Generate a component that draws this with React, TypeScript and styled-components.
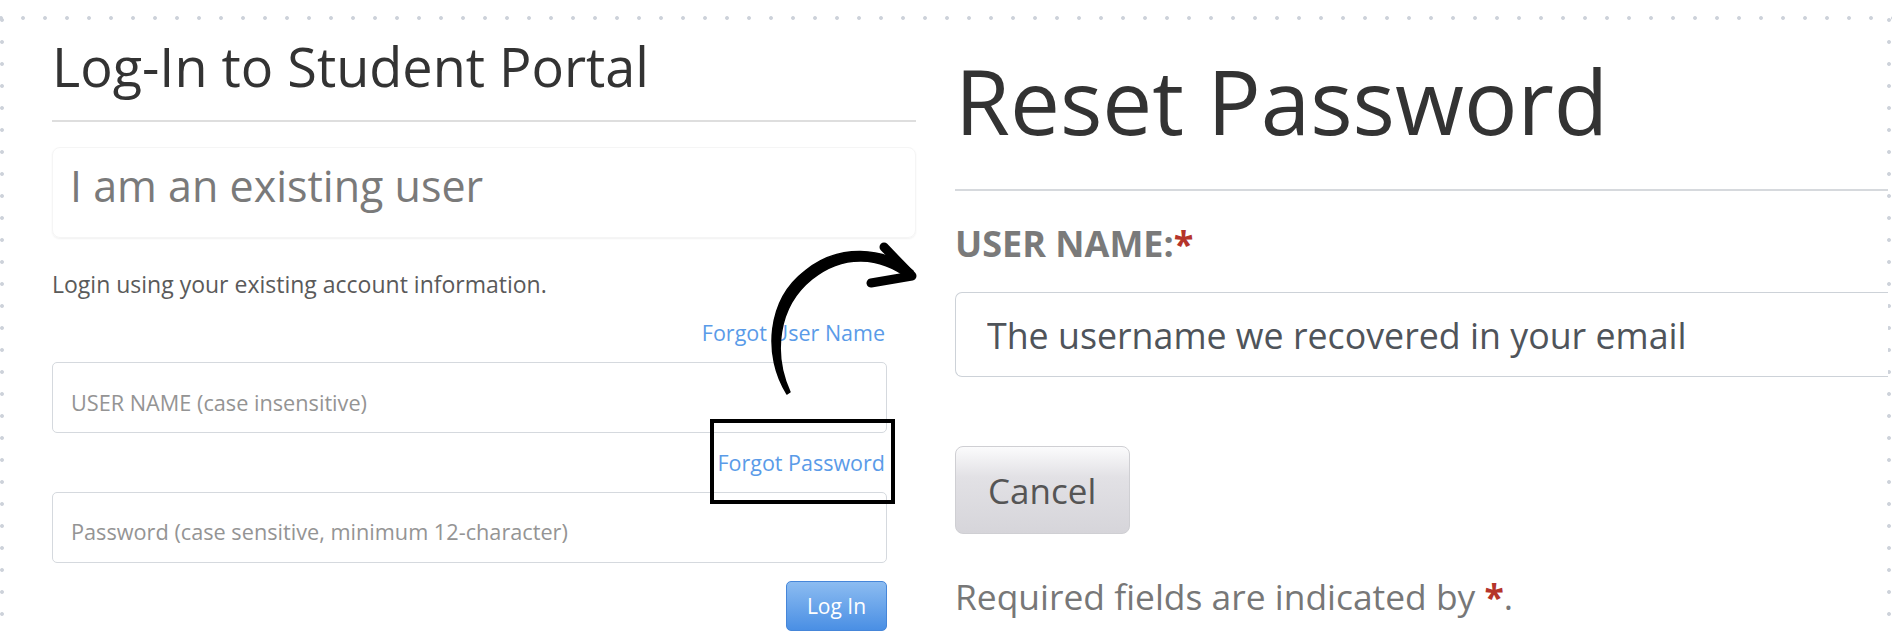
import React from "react";
import styled, { createGlobalStyle } from "styled-components";

const GlobalStyle = createGlobalStyle`
  html, body { margin: 0; padding: 0; background: #fff; }
  body { font-family: "Open Sans", "Noto Sans", sans-serif; }
  * { box-sizing: border-box; }
`;

const dot = "radial-gradient(circle at center, #cdd2da 0 1.5px, transparent 2.3px)";

const Frame = styled.div`
  position: relative;
  display: flex;
  align-items: flex-start;
  height: 634px;
  overflow: hidden;
  background-color: #fff;
  background-image: ${dot}, ${dot}, ${dot};
  background-size: 22px 22px;
  background-repeat: repeat-x, repeat-y, repeat-y;
  background-position: 12px 7px, -9px 9px, right -8px top 9px;
`;

const LeftPanel = styled.section`
  width: 864px;
  margin-left: 52px;
  padding-top: 32px;
  flex: none;
`;

const RightPanel = styled.section`
  flex: 1;
  min-width: 0;
  margin-left: 39px;
  margin-right: 4px;
  padding-top: 51px;
`;

const Title = styled.h1<{ $size: number; $lh: number }>`
  margin: 0;
  font-weight: 400;
  font-size: ${(p) => p.$size}px;
  line-height: ${(p) => p.$lh}px;
  color: #333;
  white-space: nowrap;
`;

const Rule = styled.hr<{ $top: number; $color: string }>`
  margin: ${(p) => p.$top}px 0 0;
  border: none;
  height: 2px;
  background: ${(p) => p.$color};
`;

const ExistingBox = styled.div`
  margin-top: 25px;
  border: 1px solid #f5f5f5;
  border-radius: 8px;
  box-shadow: 0 1px 2px rgba(0, 0, 0, 0.06);
  padding: 8px 17px 21px;
  font-size: 43px;
  line-height: 60px;
  color: #7a7a7a;
`;

const Intro = styled.p`
  margin: 31px 0 0;
  font-size: 23px;
  line-height: 30px;
  color: #5a5a5a;
`;

const Form = styled.div`
  width: 835px;
`;

const LinkRow = styled.div<{ $top: number }>`
  margin-top: ${(p) => p.$top}px;
  padding-right: 2px;
  text-align: right;
  font-size: 21.5px;
  line-height: 30px;
`;

const Link = styled.a`
  color: #5a9be8;
  text-decoration: none;
`;

const LoginInput = styled.input<{ $top: number; $pt: number }>`
  display: block;
  width: 100%;
  height: 71px;
  margin-top: ${(p) => p.$top}px;
  padding: ${(p) => p.$pt}px 18px 0;
  border: 1px solid #d5d9de;
  border-radius: 5px;
  background: #fff;
  font-family: "Open Sans", "Noto Sans", sans-serif;
  font-size: 21.7px;
  color: #555;
  outline: none;
  &::placeholder {
    color: #949494;
  }
`;

const ButtonRow = styled.div`
  display: flex;
  justify-content: flex-end;
  margin-top: 18px;
`;

const PrimaryButton = styled.button`
  width: 101px;
  height: 50px;
  border: 1px solid #4686d9;
  border-radius: 5px;
  background: linear-gradient(#8cbcf1, #4a8fe4);
  color: #fff;
  font-family: "Open Sans", "Noto Sans", sans-serif;
  font-size: 21px;
  padding: 0;
`;

const FieldLabel = styled.label`
  display: block;
  margin-top: 33px;
  font-size: 36px;
  line-height: 40px;
  font-weight: 700;
  color: #7a7a7a;
`;

const Req = styled.span`
  color: #b5342a;
  font-weight: 700;
`;

const WideInput = styled.input`
  display: block;
  width: 100%;
  height: 85px;
  margin-top: 28px;
  padding: 0 0 0 31px;
  border: 1.5px solid #cdd2d8;
  border-right: none;
  border-radius: 7px 0 0 7px;
  background: #fff;
  font-family: "Open Sans", "Noto Sans", sans-serif;
  font-size: 35.75px;
  color: #4f545a;
  outline: none;
`;

const CancelButton = styled.button`
  display: block;
  width: 175px;
  height: 88px;
  margin-top: 69px;
  padding: 0 0 0 32px;
  text-align: left;
  border: 1.5px solid #cfcfd3;
  border-radius: 8px;
  background: linear-gradient(#fbfbfc 0%, #e2e1e5 35%, #d6d5da 100%);
  font-family: "Open Sans", "Noto Sans", sans-serif;
  font-size: 35px;
  color: #555;
`;

const Note = styled.p`
  margin: 40px 0 0;
  font-size: 35.4px;
  line-height: 44px;
  color: #777;
`;

const Highlight = styled.div`
  position: absolute;
  left: 710px;
  top: 419px;
  width: 185px;
  height: 85px;
  border: 4px solid #000;
  pointer-events: none;
`;

const ArrowSvg = styled.svg`
  position: absolute;
  left: 760px;
  top: 235px;
  width: 170px;
  height: 170px;
  overflow: visible;
  pointer-events: none;
`;

export default function App() {
  return (
    <>
      <GlobalStyle />
      <Frame>
        <LeftPanel>
          <Title $size={54} $lh={68}>Log-In to Student Portal</Title>
          <Rule $top={20} $color="#dedede" />
          <ExistingBox>I am an existing user</ExistingBox>
          <Intro>Login using your existing account information.</Intro>
          <Form>
            <LinkRow $top={19}>
              <Link href="#">Forgot User Name</Link>
            </LinkRow>
            <LoginInput $top={14} $pt={10} placeholder="USER NAME (case insensitive)" />
            <LinkRow $top={15}>
              <Link href="#">Forgot Password</Link>
            </LinkRow>
            <LoginInput $top={14} $pt={8} placeholder="Password (case sensitive, minimum 12-character)" />
            <ButtonRow>
              <PrimaryButton>Log In</PrimaryButton>
            </ButtonRow>
          </Form>
        </LeftPanel>
        <RightPanel>
          <Title $size={89} $lh={100}>Reset Password</Title>
          <Rule $top={38} $color="#d6d9dd" />
          <FieldLabel>
            USER NAME:<Req>*</Req>
          </FieldLabel>
          <WideInput readOnly defaultValue="The username we recovered in your email" />
          <CancelButton>Cancel</CancelButton>
          <Note>
            Required fields are indicated by <Req>*</Req>.
          </Note>
        </RightPanel>
        <Highlight />
        <ArrowSvg viewBox="0 0 170 170">
          <path
            d="M27 159 C 3 121, 7 65, 45 36 C 78 9, 124 11, 153 36 L 149 44 C 120 21, 83 19, 52 44 C 17 72, 13 120, 30 157 Z"
            fill="#000"
            stroke="#000"
            strokeWidth="1.5"
            strokeLinejoin="round"
          />
          <path
            d="M124 12 L152 41 L111 48"
            fill="none"
            stroke="#000"
            strokeWidth="9"
            strokeLinecap="round"
            strokeLinejoin="round"
          />
        </ArrowSvg>
      </Frame>
    </>
  );
}
